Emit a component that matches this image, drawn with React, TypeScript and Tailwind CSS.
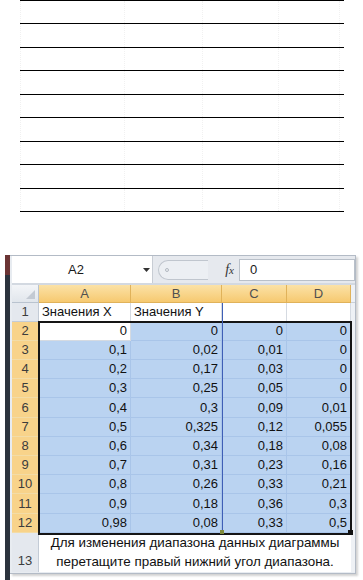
const lineRows = [24, 24, 23, 24, 23, 24, 23, 24, 23];

const data: string[][] = [
  ["0", "0", "0", "0"],
  ["0,1", "0,02", "0,01", "0"],
  ["0,2", "0,17", "0,03", "0"],
  ["0,3", "0,25", "0,05", "0"],
  ["0,4", "0,3", "0,09", "0,01"],
  ["0,5", "0,325", "0,12", "0,055"],
  ["0,6", "0,34", "0,18", "0,08"],
  ["0,7", "0,31", "0,23", "0,16"],
  ["0,8", "0,26", "0,33", "0,21"],
  ["0,9", "0,18", "0,36", "0,3"],
  ["0,98", "0,08", "0,33", "0,5"],
];

const rowHeights = [19, 19, 19, 19, 20, 19, 19, 19, 19, 20, 19];
const colWidths = ["w-[92px]", "w-[91px]", "w-[65px]", "w-[64px]"];

function EmptyTable() {
  return (
    <div className="ml-[20px] w-[324px] border-t border-black">
      {lineRows.map((h, i) => (
        <div
          key={i}
          style={{ height: i === 0 ? h - 1 : h }}
          className="grid grid-cols-[104px_78px_76px_62px_4px] border-b border-black"
        >
          <div className="border-l border-dotted border-[#f1f1f1]" />
          <div className="border-l border-dotted border-[#f1f1f1]" />
          <div className="border-l border-dotted border-[#f1f1f1]" />
          <div className="border-x border-dotted border-[#f1f1f1]" />
          <div />
        </div>
      ))}
    </div>
  );
}

function FormulaBar() {
  return (
    <div className="flex h-[27px] items-center bg-[#e6e9ee]">
      <div className="flex h-full w-[128px] items-center justify-center bg-white text-[13px] text-[#1a1a1a]">
        A2
      </div>
      <div className="flex h-full w-[12px] items-center justify-center bg-white">
        <svg width="7" height="4" viewBox="0 0 7 4">
          <polygon points="0,0 7,0 3.5,4" fill="#333" />
        </svg>
      </div>
      <div className="h-full w-px bg-[#c8cdd4]" />
      <div className="ml-[5px] flex h-[20px] w-[50px] items-center rounded-l-full border border-r-0 border-[#c0c6ce] bg-[#eceff3] pl-[6px]">
        <div className="h-[4px] w-[4px] rounded-full border border-[#b3b9c1]" />
      </div>
      <div className="flex h-full w-[30px] items-center justify-end pr-[4px]">
        <span className="font-['Liberation_Serif',serif] text-[14px] italic text-[#333]">
          f<span className="text-[11px]">x</span>
        </span>
      </div>
      <div className="ml-[1px] flex h-[22px] flex-1 items-center border border-[#b9c0c9] bg-white pl-[10px] text-[13px] text-[#1a1a1a]">
        0
      </div>
    </div>
  );
}

function HeaderRow() {
  return (
    <div className="flex h-[18px]">
      <div className="relative w-[27px] border-r border-b border-[#b9c3cf] bg-linear-to-b from-[#f3f5f8] to-[#e1e6ec]">
        <svg className="absolute right-[3px] bottom-[3px]" width="9" height="9" viewBox="0 0 9 9">
          <polygon points="9,0 9,9 0,9" fill="#c3cad3" />
        </svg>
      </div>
      {["A", "B", "C", "D"].map((c, i) => (
        <div
          key={c}
          className={`${colWidths[i]} flex items-center justify-center border-r border-b border-[#e0b25a] bg-linear-to-b from-[#fbe2a6] to-[#f6c970] text-[13px] text-[#505050]`}
        >
          {c}
        </div>
      ))}
      <div className="flex-1 border-b border-[#c9d0d8] bg-[#eef1f5]" />
    </div>
  );
}

export default function App() {
  return (
    <div className="relative h-[580px] w-[363px] overflow-hidden bg-white font-['Liberation_Sans',Arial,sans-serif]">
      <EmptyTable />

      <div className="mt-[43px] flex h-[325px]">
        <div className="ml-[5px] flex w-[5px] flex-col">
          <div className="h-[20px] bg-[#6b3434]" />
          <div className="flex-1 bg-[#2c333d]" />
        </div>

        <div className="flex h-[319px] w-[346px] flex-col border-t border-r border-b border-[#b3bbc6] bg-[#e8ecf1] pl-[2px] shadow-[2px_2px_2px_rgba(0,0,0,0.18)]">
          <FormulaBar />
          <div className="h-[2px] bg-[#d3d9e1]" />

          <div className="relative">
            <HeaderRow />

            {/* row 1 */}
            <div className="flex h-[19px]">
              <div className="flex w-[27px] items-center justify-center border-r border-b border-[#c3cbd6] bg-[#e4e8ee] text-[13px] text-[#3c3c3c]">
                1
              </div>
              <div className="flex w-[92px] items-center border-r border-b border-[#d5dae1] bg-white pl-[3px] text-[13px] text-[#111]">
                Значения X
              </div>
              <div className="flex w-[91px] items-center border-r border-b border-[#d5dae1] bg-white pl-[3px] text-[13px] text-[#111]">
                Значения Y
              </div>
              <div className="w-[65px] border-r border-b border-[#d5dae1] bg-white" />
              <div className="w-[64px] border-r border-b border-[#d5dae1] bg-white" />
              <div className="flex-1 bg-[#eef1f5]" />
            </div>

            {data.map((row, r) => (
              <div key={r} className="flex" style={{ height: rowHeights[r] }}>
                <div className="flex w-[27px] items-center justify-center border-r border-b border-r-[#d9aa55] border-b-[#f3dca6] bg-[#f8d38a] text-[13px] text-[#3c3c3c]">
                  {r + 2}
                </div>
                {row.map((v, c) => (
                  <div
                    key={c}
                    className={`${colWidths[c]} flex items-center justify-end border-r border-b pr-[3px] text-[13px] text-[#111] ${
                      r === 0 && c === 0
                        ? "border-[#d5dae1] bg-white"
                        : "border-[#a9c5e9] bg-[#bad3f1]"
                    }`}
                  >
                    {v}
                  </div>
                ))}
                <div className="flex-1 bg-[#eef1f5]" />
              </div>
            ))}

            {/* row 13 */}
            <div className="flex h-[39px]">
              <div className="flex w-[27px] items-end justify-center border-r border-[#c3cbd6] bg-[#e4e8ee] pb-[2px] text-[13px] text-[#3c3c3c]">
                13
              </div>
              <div className="flex w-[312px] flex-col items-center justify-center bg-white text-[13.4px] leading-[18.5px] text-[#111]">
                <span>Для изменения диапазона данных диаграммы</span>
                <span>перетащите правый нижний угол диапазона.</span>
              </div>
              <div className="flex-1 bg-[#eef1f5]" />
            </div>

            {/* chart range outline */}
            <div className="absolute top-[36px] left-[26px] h-[214px] w-[314px] border-2 border-[#151515]" />
            <div className="absolute top-[18px] left-[210px] h-[231px] w-px bg-[#3f5fb6]" />
            <div className="absolute top-[245px] left-[208px] h-[4px] w-[4px] bg-[#7f8a3c]" />
            <div className="absolute top-[245px] left-[336px] h-[5px] w-[5px] bg-[#111]" />
          </div>
        </div>
      </div>
    </div>
  );
}
